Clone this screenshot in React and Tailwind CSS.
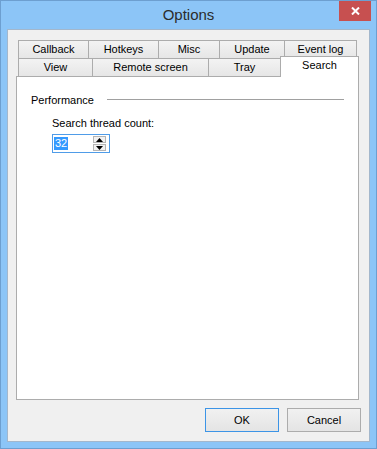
import React from "react";

const font = { fontFamily: '"Liberation Sans", Arial, sans-serif' };

const row1 = [
  ["Callback", 71],
  ["Hotkeys", 71],
  ["Misc", 62],
  ["Update", 66],
  ["Event log", 73],
];

const row2 = [
  ["View", 75],
  ["Remote screen", 117],
  ["Tray", 73],
];

function Tab({ label, w }) {
  return (
    <div
      className="-ml-px first:ml-0 h-[18px] border border-b-0 border-[#acacac] bg-gradient-to-b from-[#f3f3f3] to-[#e6e6e6] flex items-center justify-center text-[11px] text-black leading-none"
      style={{ width: w }}
    >
      {label}
    </div>
  );
}

export default function App() {
  return (
    <div
      className="w-[377px] h-[449px] bg-[#8cc5f7] border border-[#6d9fd0] flex flex-col select-none"
      style={font}
    >
      {/* title bar */}
      <div className="relative h-[28px] flex items-center justify-center">
        <span className="text-[15px] text-[#2b2b2b] mt-[1px]">Options</span>
        <div className="absolute top-0 right-[5px] w-[32px] h-[20px] bg-[#c75050] flex items-center justify-center">
          <svg width="9" height="8" viewBox="0 0 9 8">
            <path d="M1 0.5 L8 7.5 M8 0.5 L1 7.5" stroke="#fff" strokeWidth="2" />
          </svg>
        </div>
      </div>

      {/* client */}
      <div className="mx-[6px] mb-[6px] flex-1 border border-[#a3b7cc] bg-[#f0f0f0] flex flex-col">
        <div className="pt-[10px] px-[8px] flex flex-col">
          <div className="flex pl-[2px]">
            {row1.map(([l, w]) => (
              <Tab key={l} label={l} w={w} />
            ))}
          </div>
          <div className="flex pl-[2px] items-end">
            {row2.map(([l, w]) => (
              <Tab key={l} label={l} w={w} />
            ))}
            <div className="-ml-px relative z-10 w-[79px] h-[21px] -mt-[3px] mb-[-1px] border border-b-0 border-[#acacac] bg-white flex items-start justify-center pt-[3px] text-[11px] text-black leading-none">
              Search
            </div>
          </div>

          {/* panel */}
          <div className="w-[343px] h-[324px] border border-[#acacac] bg-white">
            <div className="flex items-center pt-[15px] pl-[14px] pr-[14px]">
              <span className="text-[11px] text-black">Performance</span>
              <div className="flex-1 ml-[13px] h-px bg-[#a0a0a0] mt-[-2px]" />
            </div>
            <div className="pl-[35px] mt-[6px] text-[11px] text-black">Search thread count:</div>
            <div className="ml-[35px] mt-[3px] w-[58px] h-[19px] border border-[#4f9ce8] flex items-center pl-[1px] pr-[3px]">
              <span className="bg-[#3399ff] text-white text-[11px] leading-none px-[1px] py-[1px]">32</span>
              <div className="ml-auto flex flex-col gap-[1px]">
                <div className="w-[13px] h-[7px] border border-[#b5b5b5] bg-[#f2f2f2] flex items-center justify-center">
                  <svg width="7" height="4" viewBox="0 0 7 4">
                    <path d="M3.5 0 L7 4 L0 4 Z" fill="#000" />
                  </svg>
                </div>
                <div className="w-[13px] h-[7px] border border-[#b5b5b5] bg-[#f2f2f2] flex items-center justify-center">
                  <svg width="7" height="4" viewBox="0 0 7 4">
                    <path d="M0 0 L7 0 L3.5 4 Z" fill="#000" />
                  </svg>
                </div>
              </div>
            </div>
          </div>
        </div>

        {/* buttons */}
        <div className="flex justify-end gap-[8px] pr-[8px] mt-[8px]">
          <div className="w-[74px] h-[24px] border border-[#3c94e6] bg-gradient-to-b from-[#f1f1f1] to-[#e4e4e4] flex items-center justify-center text-[11px] text-black">
            OK
          </div>
          <div className="w-[74px] h-[24px] border border-[#acacac] bg-gradient-to-b from-[#f1f1f1] to-[#e4e4e4] flex items-center justify-center text-[11px] text-black">
            Cancel
          </div>
        </div>
      </div>
    </div>
  );
}
